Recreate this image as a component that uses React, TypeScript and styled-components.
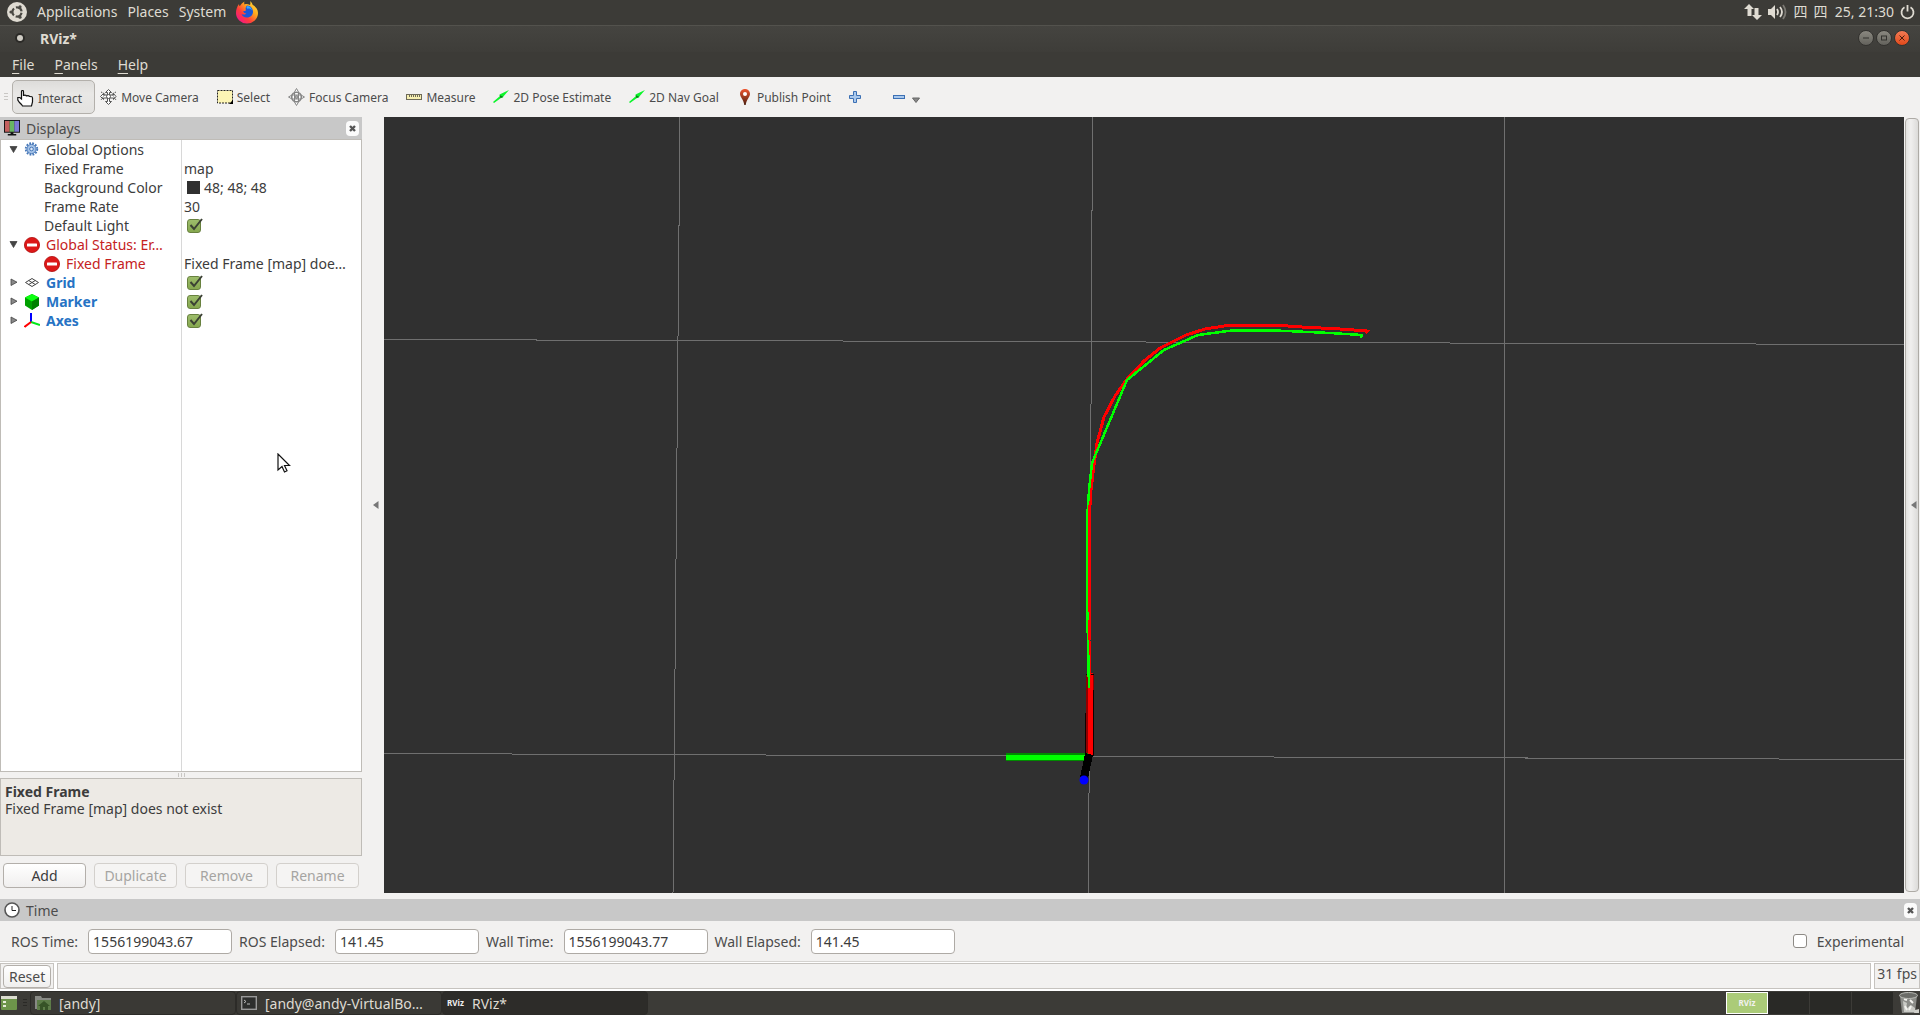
import React, { useState } from 'react';
import styled, { createGlobalStyle, css } from 'styled-components';

const UI_FONT = '"Noto Sans", "Open Sans", "Noto Sans CJK SC", sans-serif';

const GlobalStyle = createGlobalStyle`
  * { box-sizing: border-box; }
  html, body, #root { height: 100%; }
  body {
    margin: 0;
    overflow: hidden;
    background: #f2f1f0;
    color: #3c3c3c;
    font: 14px/19px ${UI_FONT};
  }
  button, input { font: inherit; color: inherit; }
  svg { display: block; flex: none; }
`;

const Desktop = styled.div`
  height: 100vh;
  display: flex;
  flex-direction: column;
`;

/* ---------- top panel ---------- */
const TopPanel = styled.header`
  height: 26px;
  flex: none;
  display: flex;
  align-items: center;
  justify-content: space-between;
  padding: 0 5px 2px 7px;
  background: #3c3b37;
  border-bottom: 1px solid #53524d;
  color: #dfdbd2;
`;
const PanelGroup = styled.nav<{ $gap: number }>`
  display: flex;
  align-items: center;
  gap: ${p => p.$gap}px;
`;
const PanelButton = styled.button`
  border: 0;
  padding: 0;
  background: none;
  color: inherit;
  display: flex;
  align-items: center;
`;

/* ---------- window chrome ---------- */
const TitleBar = styled.div`
  height: 26px;
  flex: none;
  display: flex;
  align-items: center;
  gap: 15px;
  padding: 0 10px 2px 15px;
  background: linear-gradient(#454440, #3e3d39);
  color: #dfdbd2;
  font-weight: 700;
`;
const Title = styled.h1`
  margin: 0;
  font: inherit;
  flex: 1;
`;
const WindowButtons = styled.div`
  display: flex;
  gap: 2px;
`;
const RoundButton = styled.button<{ $close?: boolean }>`
  width: 16px;
  height: 16px;
  padding: 0;
  display: grid;
  place-items: center;
  border-radius: 50%;
  border: 1px solid #33322f;
  background: ${p => (p.$close ? 'linear-gradient(#f37b55, #e2491a)' : 'linear-gradient(#8a8880, #63625c)')};
`;
const MenuBar = styled.nav`
  height: 25px;
  flex: none;
  display: flex;
  align-items: center;
  gap: 20px;
  padding: 0 12px;
  background: #3c3b37;
  color: #dfdbd2;
`;
const MenuItem = styled.button`
  border: 0;
  padding: 0;
  background: none;
  &::first-letter { text-decoration: underline; text-underline-offset: 3px; }
`;

/* ---------- toolbar ---------- */
const ToolBar = styled.div`
  height: 40px;
  flex: none;
  display: flex;
  align-items: center;
  padding: 0 4px;
  background: #f2f1f0;
  font-size: 12px;
  color: #4c4c4c;
`;
const Grip = styled.span`
  width: 4px;
  height: 8px;
  margin-right: 4px;
  background: repeating-linear-gradient(#c9c7c4 0 1px, transparent 1px 3px);
`;
const ToolButton = styled.button<{ $active?: boolean }>`
  height: 34px;
  min-width: 44px;
  display: flex;
  align-items: center;
  gap: 4px;
  padding: 0 12px 0 4px;
  white-space: nowrap;
  border: 1px solid transparent;
  border-radius: 5px;
  background: none;
  ${p => p.$active && css`
    padding-top: 2px;
    border-color: #b3b0ab;
    background: linear-gradient(#dddcda, #e9e8e6 40%, #e3e2e0);
  `}
`;

/* ---------- workspace ---------- */
const Workspace = styled.main`
  flex: 1;
  min-height: 0;
  display: flex;
`;
const Dock = styled.section`
  width: 362px;
  flex: none;
  display: flex;
  flex-direction: column;
`;
const DockHeader = styled.div`
  height: 22px;
  flex: none;
  display: flex;
  align-items: center;
  gap: 6px;
  padding: 0 2px 0 4px;
  background: #c8c8c8;
  color: #4c4c4c;
`;
const DockTitle = styled.h2`
  margin: 0;
  font: inherit;
  flex: 1;
`;
const CloseButton = styled.button`
  width: 13px;
  height: 15px;
  padding: 0;
  display: grid;
  place-items: center;
  border: 0;
  border-radius: 4px;
  background: #fbfbfb;
  margin-right: 1px;
`;
const Tree = styled.div`
  flex: 1;
  min-height: 0;
  border: 1px solid #bfbcb7;
  background: linear-gradient(90deg, #fff 180px, #d8d8d8 180px 181px, #fff 181px);
`;
const TreeRow = styled.div`
  height: 19px;
  display: grid;
  grid-template-columns: 180px minmax(0, 1fr);
  align-items: center;
`;
const NameCell = styled.div<{ $depth: number; $tone?: 'error' | 'display' }>`
  display: flex;
  align-items: center;
  gap: 6px;
  white-space: nowrap;
  padding-left: ${p => (p.$depth ? 43 : 8)}px;
  ${p => p.$tone === 'error' && 'color: #c52222;'}
  ${p => p.$tone === 'display' && 'color: #2673c4; font-weight: 700;'}
`;
const ValueCell = styled.div`
  display: flex;
  align-items: center;
  gap: 4px;
  white-space: nowrap;
  padding-left: 3px;
`;
const Swatch = styled.span`
  width: 13px;
  height: 13px;
  margin-left: 3px;
  background: #303030;
`;
const CheckWrap = styled.label`
  display: grid;
  width: 17px;
  height: 17px;
  margin-left: 3px;
  > * { grid-area: 1 / 1; }
  svg { pointer-events: none; }
`;
const CheckInput = styled.input`
  appearance: none;
  margin: 0;
  width: 14px;
  height: 14px;
  align-self: center;
  border: 1px solid #8d8a85;
  border-radius: 3px;
  background: #fff;
  &:checked { background: linear-gradient(#9dbd6b, #86a84f); border-color: #68813f; }
`;
const Splitter = styled.div`
  height: 6px;
  flex: none;
  display: grid;
  place-items: center;
  &::after {
    content: '';
    width: 7px;
    height: 4px;
    background: repeating-linear-gradient(90deg, #c9c7c4 0 1px, transparent 1px 3px);
  }
`;
const HelpBox = styled.div`
  height: 78px;
  flex: none;
  padding: 4px;
  line-height: 17px;
  border: 1px solid #bfbcb7;
  background: #edeae5;
  p { margin: 0; }
`;
const DockActions = styled.div`
  display: grid;
  grid-template-columns: repeat(4, 1fr);
  gap: 8px;
  padding: 7px 3px 5px;
`;
const PushButton = styled.button<{ $compact?: boolean }>`
  height: ${p => (p.$compact ? 23 : 25)}px;
  padding: 0 5px;
  border: 1px solid #b3afaa;
  border-radius: 4px;
  line-height: 17px;
  background: linear-gradient(#fff, #f0efee);
  &:disabled { color: #a5a4a2; border-color: #d3d0cc; background: #f5f4f3; }
`;
const CollapseLeft = styled.button`
  width: 22px;
  flex: none;
  padding: 0 0 0 6px;
  display: grid;
  place-items: center;
  border: 0;
  background: #f2f1f0;
`;
const View = styled.section`
  flex: 1;
  min-width: 0;
  background: #303030;
  svg { width: 100%; height: 100%; }
`;
const CollapseRight = styled.button`
  width: 14px;
  flex: none;
  margin: 1px;
  padding: 0 0 0 3px;
  display: grid;
  place-items: center;
  border: 1px solid #aeaba6;
  border-radius: 4px;
  background: linear-gradient(90deg, #e2e1df, #f0efee 40%, #dcdbd9);
`;

/* ---------- time panel ---------- */
const TimePanel = styled.section`
  flex: none;
  padding-top: 6px;
`;
const TimeFields = styled.form`
  height: 40px;
  display: flex;
  align-items: center;
  gap: 7px;
  padding: 0 16px 0 11px;
  color: #4c4c4c;
`;
const Field = styled.label`
  display: flex;
  align-items: center;
  gap: 10px;
  white-space: nowrap;
`;
const TextBox = styled.input`
  width: 144px;
  height: 25px;
  padding: 0 4px;
  border: 1px solid #aeaaa5;
  border-radius: 4px;
  background: #fff;
  color: #3c3c3c;
`;
const Spacer = styled.span`
  flex: 1;
`;

/* ---------- status bar ---------- */
const StatusBar = styled.footer`
  height: 30px;
  flex: none;
  display: flex;
  gap: 3px;
  padding: 1px 0 2px;
  border-top: 1px solid #d4d2cf;
  background: #fff;
`;
const StatusCell = styled.div<{ $grow?: boolean }>`
  border: 1px solid #c6c3bf;
  background: #f2f1f0;
  ${p => (p.$grow ? 'flex: 1;' : 'padding: 1px 2px;')}
  white-space: nowrap;
  line-height: 17px;
  color: #4c4c4c;
`;

/* ---------- bottom task bar ---------- */
const TaskBar = styled.nav`
  height: 24px;
  flex: none;
  display: flex;
  align-items: center;
  background: #3c3b37;
  color: #dfdbd2;
`;
const TaskButton = styled.button<{ $active?: boolean }>`
  width: 206px;
  height: 24px;
  display: flex;
  align-items: center;
  gap: 8px;
  padding: 0 4px;
  white-space: nowrap;
  border: 1px solid #2c2b28;
  border-radius: 4px;
  color: inherit;
  background: ${p => (p.$active ? '#2d2c29' : '#3a3935')};
`;
const TaskLead = styled.div`
  width: 30px;
  display: flex;
  align-items: center;
  gap: 6px;
  padding-left: 1px;
  ${Grip} { margin: 0; background: repeating-linear-gradient(#2a2926 0 1px, transparent 1px 3px); }
`;
const Pager = styled.div`
  display: grid;
  grid-template-columns: repeat(4, 42px);
  height: 22px;
  margin-right: 4px;
`;
const PagerCell = styled.button<{ $active?: boolean }>`
  padding: 0;
  display: grid;
  place-items: center;
  border: 0;
  border-right: 1px solid #3c3b37;
  background: #292926;
  ${p => p.$active && 'border: 1px solid #fff; background: #abcb78;'}
`;
const RvizMark = styled.span`
  font-size: 8px;
  font-weight: 700;
  line-height: 16px;
  min-width: 17px;
  color: #f2f1f0;
`;
const Cursor = styled.svg`
  position: absolute;
  left: 277px;
  top: 453px;
  pointer-events: none;
`;

/* ---------- drawings ---------- */
const UbuntuLogo = () => (
  <svg width="20" height="20" viewBox="0 0 20 20">
    <circle cx="10" cy="10" r="10" fill="#dfdbd2" />
    <circle cx="10" cy="10" r="4.600" fill="none" stroke="#4a4944" strokeWidth="2.200" strokeDasharray="7.600 2" transform="rotate(10 10 10)" />
    <g fill="#4a4944"><circle cx="4" cy="10" r="1.600" /><circle cx="13" cy="4.800" r="1.600" /><circle cx="13" cy="15.200" r="1.600" /></g>
  </svg>
);
const Firefox = () => (
  <svg width="22" height="24" viewBox="0 0 22 24">
    <defs>
      <linearGradient id="ff" x1="1" y1="0" x2="0.1" y2="0.9">
        <stop offset="0" stopColor="#fff04a" /><stop offset=".4" stopColor="#ffa51c" />
        <stop offset=".7" stopColor="#ff3b3b" /><stop offset="1" stopColor="#f2168b" />
      </linearGradient>
    </defs>
    <path d="M14 1c1.500 1.200 2.300 2.400 2.600 3.800C19.500 6.500 22 9.200 22 13a11 10.500 0 0 1-22 0C0 9.500 1 6.500 3 4c0 1 .2 1.700.8 2.300C5 4 6.500 2.600 8.500 1.500c-.5 1.200-.4 2.200.1 3C10 3.800 12 4 14 5c.6-1.300.5-2.700 0-4z" fill="url(#ff)" />
    <path d="M11 5.500c3.600 0 6 3 6 6.300 0 3.400-2.600 5.800-6 5.800-2.800 0-4.800-1.500-5.500-3.600 1.700 1 3.500.7 4.800-.6-1.800 0-3-1-3-2.400 1 .1 2-.1 2.700-.8C9.400 9 9.300 7 11 5.500z" fill="#1a56d6" />
    <path d="M11 6c2.700 0 4.700 1.800 5 4.500-1.500-2-3-2.300-4.600-1.800C10.500 7.800 10.300 7 11 6z" fill="#33a9ff" />
  </svg>
);
const Network = () => (
  <svg width="18" height="18" viewBox="0 0 18 18" fill="#dfdbd2">
    <path d="M5 1l5 5H7.500v7h-4V6H0z" /><path d="M13 17l-5-5h2.500V5h4v7H18z" />
  </svg>
);
const Volume = () => (
  <svg width="20" height="18" viewBox="0 0 20 18" fill="none" stroke="#dfdbd2" strokeWidth="1.800">
    <path d="M0 6h3l4-4v14l-4-4H0z" fill="#dfdbd2" stroke="none" />
    <path d="M9 6q2 3 0 6M12 4q4 5 0 10" /><path d="M15 2q5 7 0 14" stroke="#7b7973" />
  </svg>
);
const Power = () => (
  <svg width="15" height="16" viewBox="0 0 15 16" fill="none" stroke="#dfdbd2" strokeWidth="1.800">
    <path d="M4.500 3.200a6 6 0 1 0 6 0M7.500 1v6.500" />
  </svg>
);
const Hand = () => (
  <svg width="17" height="17" viewBox="0 0 17 17">
    <path d="M4.500 9V1.800q0-1.300 1-1.300t1 1.300V6q0-.8 1.500-.8t1.500 1.300q0-.8 1.500-.8t1.500 1.300q0-.5 1.500-.5t1.500 1.500v4l-1 4H5.500l-1-1.500-2-2L.8 10V7.500h2z" fill="#fff" stroke="#111" strokeWidth="1.200" />
  </svg>
);
const MoveCam = () => (
  <svg width="17" height="16" viewBox="0 0 17 16" fill="#fff" stroke="#555" strokeWidth="1">
    <path d="M8.500.5l3 3h-2v2.500h4V4.500l2.500 3-2.500 3V9h-4v3.500h2l-3 3-3-3h2V9h-4v1.500l-3-3 3-3V6h4V3.500h-2z" />
    <path d="M1 3l4 2-4 6M16 3l-4 2 4 6" fill="none" strokeDasharray="1.500 1" />
    <circle cx="8.500" cy="7.500" r="2" />
  </svg>
);
const SelectIcon = () => (
  <svg width="16" height="14" viewBox="0 0 16 14">
    <rect x=".5" y=".5" width="15" height="12.500" fill="#fdf5b5" stroke="#222" strokeDasharray="2 1" />
    <path d="M12 14l4-4v4z" fill="#000" />
  </svg>
);
const Focus = () => (
  <svg width="17" height="18" viewBox="0 0 17 18" fill="none" stroke="#858585">
    <path d="M8.500.5l2 3.500v10l-2 3.500-2-3.500V4zM.5 9l3.500-2h9l3.500 2-3.500 2H4z" fill="#fff" />
    <circle cx="8.500" cy="9" r="4.800" strokeWidth="1.600" /><circle cx="8.500" cy="9" r="1.500" fill="#aaa" />
  </svg>
);
const Ruler = () => (
  <svg width="16" height="16" viewBox="0 0 16 16">
    <rect x=".5" y="5.500" width="15" height="5" fill="#f6efb0" stroke="#6e6a58" />
    <path d="M3.500 6v2M5.500 6v2M7.500 6v2M9.500 6v2M11.500 6v2M13.500 6v2" stroke="#6e6a58" />
  </svg>
);
const Arrow = () => (
  <svg width="16" height="14" viewBox="0 0 16 14">
    <path d="M0 12l7-6-.5-1.500L16 0l-6.500 7.500L8 8l-7 5z" fill="#0cf52b" /><path d="M6.500 5l4 2-3 1z" fill="#087b18" />
  </svg>
);
const Pin = () => (
  <svg width="16" height="16" viewBox="0 0 16 16">
    <defs><linearGradient id="pin" x1="0" y1="0" x2="0" y2="1"><stop offset="0" stopColor="#f0562f" /><stop offset="1" stopColor="#4b1f10" /></linearGradient></defs>
    <path d="M8 0c3 0 5 2.200 5 5 0 3-3.500 5-4.300 11H7.300C6.500 10 3 8 3 5c0-2.800 2-5 5-5z" fill="url(#pin)" />
    <circle cx="8" cy="5" r="2" fill="#fff" />
  </svg>
);
const Plus = () => (
  <svg width="12" height="12" viewBox="0 0 12 12"><path d="M4.500.5h3v4h4v3h-4v4h-3v-4h-4v-3h4z" fill="#a9c8ec" stroke="#3c70b4" /></svg>
);
const Minus = () => (
  <svg width="12" height="4" viewBox="0 0 12 4"><rect x=".5" y=".5" width="11" height="3" fill="#a9c8ec" stroke="#3c70b4" /></svg>
);
const DropArrow = () => (
  <svg width="11" height="12" viewBox="0 0 11 12"><path d="M3.500 7h7L7 11.500z" fill="#888" stroke="#666" /></svg>
);
const Monitor = () => (
  <svg width="16" height="16" viewBox="0 0 17 17">
    <rect width="17" height="13.500" fill="#111" />
    <rect x="1" y="1" width="5" height="11.500" fill="#c4605e" /><rect x="6" y="1" width="5" height="11.500" fill="#69b562" /><rect x="11" y="1" width="5" height="11.500" fill="#7d78d4" />
    <path d="M7 13h3v2h3v1.500H4V15h3z" fill="#111" />
  </svg>
);
const Cross = () => (
  <svg width="7" height="7" viewBox="0 0 7 7"><path d="M1 1l5 5M6 1L1 6" stroke="#555" strokeWidth="2.400" /></svg>
);
const Twisty = ({ open }: { open?: boolean }) => (
  <svg width="9" height="9" viewBox="0 0 9 9">
    <path d={open ? 'M1 1.500h7L4.500 7.500z' : 'M2 1v6.500L8 4.200z'} fill={open ? '#444' : '#888'} stroke="#444" strokeWidth=".8" />
  </svg>
);
const Gear = () => (
  <svg width="16" height="16" viewBox="0 0 16 16" fill="none" stroke="#4677b8">
    <circle cx="7.500" cy="7" r="5.800" strokeWidth="1.800" strokeDasharray="1.800 1.240" />
    <circle cx="7.500" cy="7" r="4.600" fill="#a5c3e8" /><circle cx="7.500" cy="7" r="1.800" fill="#dfeafa" />
  </svg>
);
const ErrorIcon = () => (
  <svg width="16" height="16" viewBox="0 0 16 16">
    <circle cx="8" cy="8" r="7.600" fill="#dc1818" stroke="#b00c0c" strokeWidth=".8" /><rect x="3" y="6.500" width="10" height="3" rx=".5" fill="#fff" />
  </svg>
);
const GridIcon = () => (
  <svg width="16" height="16" viewBox="0 0 16 16" fill="none" stroke="#444">
    <path d="M1.500 7.500L8 3.500l6.500 4L8 11.500zM4.700 5.500l6.600 4M11.300 5.500l-6.600 4" />
  </svg>
);
const Cube = () => (
  <svg width="16" height="16" viewBox="0 0 16 16">
    <path d="M8 0l7 3.500v8L8 16l-7-4.500v-8z" fill="#00a000" /><path d="M8 0l7 3.500L8 7.500 1 3.500z" fill="#0cff10" /><path d="M8 7.500l7-4v8L8 16z" fill="#008000" />
  </svg>
);
const AxesIcon = () => (
  <svg width="16" height="16" viewBox="0 0 16 16" fill="none" strokeWidth="2">
    <path d="M7 9V0" stroke="#00f" /><path d="M7 9l9 3" stroke="#00e81a" /><path d="M7 9l-6.500 5" stroke="#f00" />
  </svg>
);
const Clock = () => (
  <svg width="16" height="16" viewBox="0 0 16 16" fill="#fff" stroke="#555"><circle cx="8" cy="8" r="7" strokeWidth="1.600" /><path d="M8 4v4.500h4" fill="none" stroke="#222" /></svg>
);
const CollapseArrow = () => (
  <svg width="6" height="8" viewBox="0 0 6 8"><path d="M5.500 0v8L0 4z" fill="#777" /></svg>
);
const Tick = () => (
  <svg width="17" height="17" viewBox="0 0 17 17" fill="none" stroke="#3b4134" strokeWidth="2"><path d="M3.500 8l3.500 4 8-10" /></svg>
);
const DesktopIcon = () => (
  <svg width="16" height="14" viewBox="0 0 16 14"><rect width="16" height="14" rx="1" fill="#6d944a" /><rect width="16" height="3" fill="#dcddd0" /><path d="M2 5h3v2H2zM2 9h3v2H2z" fill="#e6ecd9" /></svg>
);
const Folder = () => (
  <svg width="16" height="16" viewBox="0 0 16 16"><path d="M0 1h6l1 2h9v11H0z" fill="#888a85" /><path d="M2 5h14v10H2z" fill="#5d7c48" /><path d="M9 6l6 5h-2v4h-3v-3H8v3H5v-4H3z" fill="#375327" /></svg>
);
const Terminal = () => (
  <svg width="16" height="14" viewBox="0 0 16 14"><rect x=".7" y=".7" width="14.600" height="12.600" fill="#2d2e2d" stroke="#999" strokeWidth="1.400" /><path d="M3 4l2 1.500L3 7M6 8h3" stroke="#bbb" fill="none" /></svg>
);
const Trash = () => (
  <svg width="22" height="22" viewBox="0 0 22 22"><path d="M2 4h17l-2 17H4z" fill="#8b8c88" /><path d="M5 9l4 2-1 6 5-4 4 3v4H6z" fill="#c9cac5" /><path d="M6 7l3 1M12 8l3 3M7 14l2 4M13 14l-2 4" stroke="#f3f3ef" strokeWidth="2" /><ellipse cx="10.500" cy="3.500" rx="9" ry="3" fill="#6b6c68" stroke="#b9bab5" /><path d="M17 18l4-1v4h-5z" fill="#cfcfca" /></svg>
);

const Scene = () => (
  <svg viewBox="384 117 1520 776" preserveAspectRatio="xMidYMid slice" role="img" aria-label="3D view" fill="none">
    <g stroke="#6f6f6f" shapeRendering="crispEdges">
      <path d="M680 117L673 893M1092.500 117L1088.500 893M1504.500 117V893" />
      <path d="M384 339.500L1904 344.500M384 753.500L1904 759.500" />
    </g>
    <g shapeRendering="crispEdges">
      <path d="M1090 675v80" stroke="#900000" strokeWidth="8" /><path d="M1090 673v82" stroke="#f00" strokeWidth="5" />
      <path d="M1086 675v-1h8M1093.500 690v66M1085.500 713v40" stroke="#100" />
      <path d="M1006 756.500h82" stroke="#008a00" strokeWidth="8" /><path d="M1006 757h80" stroke="#0f0" strokeWidth="5" />
      <path d="M1089 754l-5 24" stroke="#000" strokeWidth="8" />
      <path d="M1090 675L1089 640V520L1091 490L1094 465L1097 443L1104 417L1115 396L1127 379L1144 361L1160 348L1186 335L1205 329L1224 326L1245 325L1273 325L1302 327L1340 329L1367 331L1365 333" stroke="#f00" strokeWidth="3" />
      <path d="M1089 688L1088 643L1087 600V520L1089 490L1092 463L1127 380L1164 350L1198 335L1232 330.500H1275L1330 333L1362 335L1361 338" stroke="#0f0" strokeWidth="2.500" />
      <path d="M1089 505V548M1088.500 568V605M1089 620V640" stroke="#f00" strokeWidth="2" />
    </g>
    <circle cx="1084" cy="780" r="4.500" fill="#00f" />
  </svg>
);

/* ---------- content ---------- */
const tools: { label: string; icon: React.ReactNode }[] = [
  { label: 'Interact', icon: <Hand /> },
  { label: 'Move Camera', icon: <MoveCam /> },
  { label: 'Select', icon: <SelectIcon /> },
  { label: 'Focus Camera', icon: <Focus /> },
  { label: 'Measure', icon: <Ruler /> },
  { label: '2D Pose Estimate', icon: <Arrow /> },
  { label: '2D Nav Goal', icon: <Arrow /> },
  { label: 'Publish Point', icon: <Pin /> },
];

type Row = {
  name: string;
  depth: number;
  open?: boolean;
  icon?: React.ReactNode;
  tone?: 'error' | 'display';
  value?: string;
  swatch?: boolean;
  check?: boolean;
};
const rows: Row[] = [
  { name: 'Global Options', depth: 0, open: true, icon: <Gear /> },
  { name: 'Fixed Frame', depth: 1, value: 'map' },
  { name: 'Background Color', depth: 1, value: '48; 48; 48', swatch: true },
  { name: 'Frame Rate', depth: 1, value: '30' },
  { name: 'Default Light', depth: 1, check: true },
  { name: 'Global Status: Er…', depth: 0, open: true, icon: <ErrorIcon />, tone: 'error' },
  { name: 'Fixed Frame', depth: 1, icon: <ErrorIcon />, tone: 'error', value: 'Fixed Frame [map] doe…' },
  { name: 'Grid', depth: 0, icon: <GridIcon />, tone: 'display', check: true },
  { name: 'Marker', depth: 0, icon: <Cube />, tone: 'display', check: true },
  { name: 'Axes', depth: 0, icon: <AxesIcon />, tone: 'display', check: true },
];
const times = [
  ['ROS Time:', '1556199043.67'],
  ['ROS Elapsed:', '141.45'],
  ['Wall Time:', '1556199043.77'],
  ['Wall Elapsed:', '141.45'],
];

function Check({ label, initial }: { label: string; initial: boolean }) {
  const [on, setOn] = useState(initial);
  return (
    <CheckWrap>
      <CheckInput type="checkbox" aria-label={label} checked={on} onChange={() => setOn(!on)} />
      {on && <Tick />}
    </CheckWrap>
  );
}

export default function App() {
  const [active, setActive] = useState('Interact');
  return (
    <Desktop>
      <GlobalStyle />
      <TopPanel>
        <PanelGroup $gap={10}>
          <UbuntuLogo />
          <PanelButton>Applications</PanelButton>
          <PanelButton>Places</PanelButton>
          <PanelButton>System</PanelButton>
          <Firefox />
        </PanelGroup>
        <PanelGroup $gap={6}>
          <Network />
          <Volume />
          <PanelButton>四</PanelButton>
          <PanelButton>四&nbsp; 25, 21:30</PanelButton>
          <Power />
        </PanelGroup>
      </TopPanel>

      <TitleBar>
        <svg width="10" height="12" viewBox="0 0 10 12"><circle cx="5" cy="6" r="5" fill="#2b2a27" /><circle cx="5" cy="6" r="3" fill="#cfccc4" /></svg>
        <Title>RViz*</Title>
        <WindowButtons>
          <RoundButton aria-label="Minimize"><svg width="8" height="8"><path d="M1 4h6" stroke="#33322f" /></svg></RoundButton>
          <RoundButton aria-label="Maximize"><svg width="8" height="8"><rect x="1.500" y="2" width="5" height="4" fill="none" stroke="#33322f" /></svg></RoundButton>
          <RoundButton $close aria-label="Close"><svg width="8" height="8"><path d="M1.500 1.500l5 5M6.500 1.500l-5 5" stroke="#4a1d0c" /></svg></RoundButton>
        </WindowButtons>
      </TitleBar>
      <MenuBar>
        <MenuItem>File</MenuItem>
        <MenuItem>Panels</MenuItem>
        <MenuItem>Help</MenuItem>
      </MenuBar>

      <ToolBar>
        <Grip />
        {tools.map(t => (
          <ToolButton key={t.label} $active={active === t.label} onClick={() => setActive(t.label)}>
            {t.icon}{t.label}
          </ToolButton>
        ))}
        <ToolButton aria-label="Add tool"><Plus /></ToolButton>
        <ToolButton aria-label="Remove tool"><Minus /><DropArrow /></ToolButton>
      </ToolBar>

      <Workspace>
        <Dock>
          <DockHeader>
            <Monitor />
            <DockTitle>Displays</DockTitle>
            <CloseButton aria-label="Close displays"><Cross /></CloseButton>
          </DockHeader>
          <Tree>
            {rows.map((r, i) => (
              <TreeRow key={i}>
                <NameCell $depth={r.depth} $tone={r.tone}>
                  {r.depth === 0 && <Twisty open={r.open} />}
                  {r.icon}
                  <span>{r.name}</span>
                </NameCell>
                <ValueCell>
                  {r.swatch && <Swatch />}
                  {r.value && <span>{r.value}</span>}
                  {r.check && <Check label={r.name} initial />}
                </ValueCell>
              </TreeRow>
            ))}
          </Tree>
          <Splitter />
          <HelpBox>
            <p><b>Fixed Frame</b></p>
            <p>Fixed Frame [map] does not exist</p>
          </HelpBox>
          <DockActions>
            <PushButton>Add</PushButton>
            <PushButton disabled>Duplicate</PushButton>
            <PushButton disabled>Remove</PushButton>
            <PushButton disabled>Rename</PushButton>
          </DockActions>
        </Dock>
        <CollapseLeft aria-label="Hide left panel"><CollapseArrow /></CollapseLeft>
        <View><Scene /></View>
        <CollapseRight aria-label="Show right panel"><CollapseArrow /></CollapseRight>
      </Workspace>

      <TimePanel>
        <DockHeader>
          <Clock />
          <DockTitle>Time</DockTitle>
          <CloseButton aria-label="Close time"><Cross /></CloseButton>
        </DockHeader>
        <TimeFields>
          {times.map(([label, value]) => (
            <Field key={label}>{label}<TextBox readOnly value={value} /></Field>
          ))}
          <Spacer />
          <Field>
            <CheckInput type="checkbox" />
            Experimental
          </Field>
        </TimeFields>
      </TimePanel>

      <StatusBar>
        <StatusCell><PushButton $compact>Reset</PushButton></StatusCell>
        <StatusCell $grow />
        <StatusCell>31 fps</StatusCell>
      </StatusBar>

      <TaskBar>
        <TaskLead><DesktopIcon /><Grip /></TaskLead>
        <TaskButton><Folder />[andy]</TaskButton>
        <TaskButton><Terminal />[andy@andy-VirtualBo…</TaskButton>
        <TaskButton $active><RvizMark>RViz</RvizMark>RViz*</TaskButton>
        <Spacer />
        <Pager>
          <PagerCell $active aria-label="Workspace 1"><RvizMark>RViz</RvizMark></PagerCell>
          <PagerCell aria-label="Workspace 2" />
          <PagerCell aria-label="Workspace 3" />
          <PagerCell aria-label="Workspace 4" />
        </Pager>
        <Trash />
      </TaskBar>

      <Cursor width="14" height="20" viewBox="0 0 14 20">
        <path d="M1 1v16l4-3.500 2.500 5.500 2.500-1.200L7.500 12.500h5z" fill="#fff" stroke="#111" strokeWidth="1.200" />
      </Cursor>
    </Desktop>
  );
}
